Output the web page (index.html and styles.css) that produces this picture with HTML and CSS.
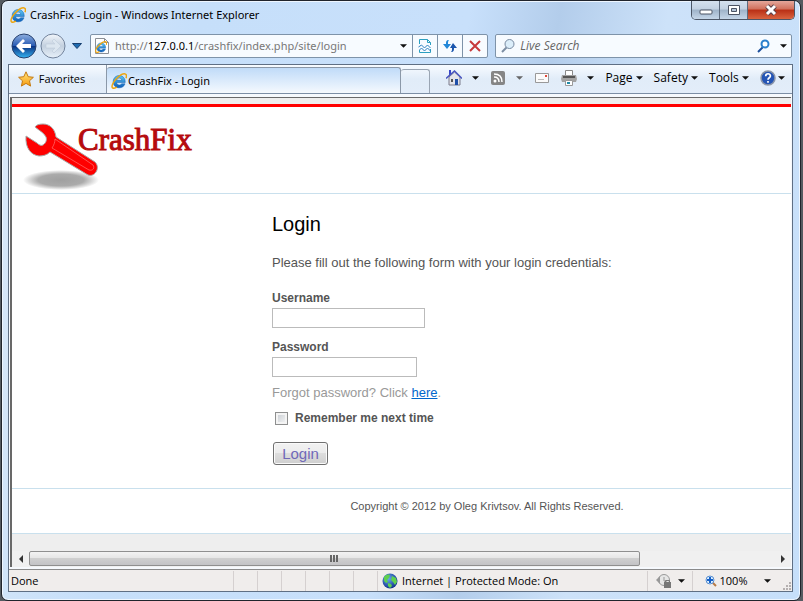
FILE: index.html
```html
<!DOCTYPE html>
<html lang="en">
<head>
<meta charset="utf-8">
<title>CrashFix - Login</title>
<link rel="stylesheet" href="styles.css">
</head>
<body>
<svg class="defs" aria-hidden="true">
  <defs>
    <linearGradient id="blue" x1="0" y1="0" x2="0" y2="1"><stop offset="0" stop-color="#5cc8f5"/><stop offset="1" stop-color="#0b5cb8"/></linearGradient>
    <linearGradient id="back" x1="0" y1="0" x2="0" y2="1"><stop offset="0" stop-color="#8fb0e0"/><stop offset=".48" stop-color="#2a5cb4"/><stop offset=".5" stop-color="#0a2f80"/><stop offset="1" stop-color="#35b4f2"/></linearGradient>
    <linearGradient id="fwd" x1="0" y1="0" x2="0" y2="1"><stop offset="0" stop-color="#f2f6fb"/><stop offset=".5" stop-color="#c3d0df"/><stop offset="1" stop-color="#e8f1fa"/></linearGradient>
    <linearGradient id="gold" x1="0" y1="0" x2="0" y2="1"><stop offset="0" stop-color="#ffe680"/><stop offset="1" stop-color="#f79a0c"/></linearGradient>
    <radialGradient id="globe" cx=".4" cy=".35" r=".7"><stop offset="0" stop-color="#6aa9f0"/><stop offset="1" stop-color="#0c2c86"/></radialGradient>
    <radialGradient id="shade"><stop offset="0" stop-color="#a0a0a0"/><stop offset=".6" stop-color="#ababab"/><stop offset="1" stop-color="#fff"/></radialGradient>
  </defs>
  <symbol id="ie" viewBox="0 0 16 16">
    <path d="M14.2 9.6H5.6c.2 1.6 1.300 2.400 2.700 2.400 1 0 1.800-.4 2.200-1.200h3.500c-.8 2.600-3 4-5.800 4C4.600 14.800 2.200 12.300 2.200 8.700 2.200 5.200 4.700 2.600 8.200 2.600c3.800 0 6.200 2.700 6 7zM5.700 7.300h5c-.1-1.300-1-2.200-2.400-2.200-1.400 0-2.300.8-2.600 2.200z" fill="url(#blue)" stroke="#0d5db0" stroke-width=".5"/>
    <path d="M15 5.200c.7-2 .6-3.600-.5-4.100-1.800-.8-5.300 1-8.400 3.900C2.700 8.200.2 12.600 1.300 14.500c.7 1.100 2.600.8 4.600-.4" fill="none" stroke="#eda50f" stroke-width="1.500"/>
  </symbol>
  <symbol id="down" viewBox="0 0 8 4"><path d="M0 0h8L4 4z"/></symbol>
</svg>

<div class="window">
  <header class="titlebar">
    <svg class="i16"><use href="#ie"/></svg>
    <span class="caption">CrashFix - Login - Windows Internet Explorer</span>
    <div class="controls">
      <button class="min" aria-label="Minimize"><svg viewBox="0 0 14 12"><rect x="1" y="6" width="12" height="4" rx="1" fill="#fff" stroke="#4c5464"/></svg></button>
      <button class="max" aria-label="Maximize"><svg viewBox="0 0 14 12"><path d="M1.500 1.500h11v9h-11z" fill="#fff" stroke="#4c5464"/><path d="M4.500 4.500h5v3h-5z" fill="#b5c5d8" stroke="#4c5464"/></svg></button>
      <button class="close" aria-label="Close"><svg viewBox="0 0 14 12"><path d="M3 2l8 8M11 2l-8 8" stroke="#5a4048" stroke-width="5"/><path d="M3 2l8 8M11 2l-8 8" stroke="#fff" stroke-width="3"/></svg></button>
    </div>
  </header>

  <nav class="navbar">
    <div class="travel">
      <button aria-label="Back"><svg viewBox="0 0 26 26"><circle cx="13" cy="13" r="12" fill="url(#back)" stroke="#28416f"/><path d="M5 13l7-7 2 2-3 3h9v4h-9l3 3-2 2z" fill="#fff"/></svg></button>
      <button aria-label="Forward"><svg viewBox="0 0 26 26"><circle cx="13" cy="13" r="12" fill="url(#fwd)" stroke="#71829b"/><path d="M21 13l-7-7-2 2 3 3H6v4h9l-3 3 2 2z" fill="#dce6f0" stroke="#b8c6d6" stroke-width=".5"/></svg></button>
      <button class="recent" aria-label="Recent pages"><svg viewBox="0 0 10 6"><path d="M.5.5h9L5 5.500z" fill="#1e6bb0" stroke="#173f70"/></svg></button>
    </div>
    <div class="address">
      <svg class="i16 page-icon" viewBox="0 0 16 16"><path d="M1.500.5h9l4 4v11h-13z" fill="#fff" stroke="#8a8f96"/><path d="M10.500.5v4h4" fill="none" stroke="#8a8f96"/><use href="#ie" x="1" y="3" width="12" height="12"/></svg>
      <a class="url" href="#">http://<b>127.0.0.1</b>/crashfix/index.php/site/login</a>
      <button class="drop" aria-label="Show addresses"><svg class="arrow"><use href="#down"/></svg></button>
      <button class="cell" aria-label="Compatibility view"><svg class="i16" viewBox="0 0 16 16" fill="none" stroke="#2c9fc0"><path d="M2.500 6V1.500h8l3 3V7M10.500 1.500v3h3M2.500 12v2.500h11V11"/><path d="M1.500 9l3-2 3 3 3-3 3 3M2.500 12l2-2 3 3 3-3 3 3" stroke="#2c80c0"/></svg></button>
      <button class="cell" aria-label="Refresh"><svg class="i16" viewBox="0 0 16 16"><path d="M7 2C4 2 4 4 4 6H1l4 5 4-5H6c0-2 0-3 1-4z" fill="#2187d8"/><path d="M9 14c3 0 3-2 3-4h3l-4-5-3 5h2c0 2 0 3-1 4z" fill="#1b56ad"/></svg></button>
      <button class="cell" aria-label="Stop"><svg class="i16" viewBox="0 0 16 16"><path d="M3 3l10 10M13 3L3 13" stroke="#c7393b" stroke-width="2"/></svg></button>
    </div>
    <div class="search">
      <svg class="i16" viewBox="0 0 16 16"><path d="M7 9l-5 5" stroke="#7d8ea3" stroke-width="2"/><circle cx="9.500" cy="6" r="4.500" fill="#dceefa" stroke="#7789a0"/></svg>
      <input type="text" placeholder="Live Search" aria-label="Live Search">
      <button aria-label="Search"><svg class="i16" viewBox="0 0 16 16"><path d="M7 9l-5 5" stroke="#1c4f9c" stroke-width="2"/><circle cx="9" cy="6" r="3.500" fill="#fff" stroke="#2b80cd" stroke-width="2"/></svg></button>
      <button aria-label="Search options"><svg class="arrow"><use href="#down"/></svg></button>
    </div>
  </nav>

  <div class="client">
    <div class="commandbar">
      <button class="favorites"><svg class="i16" viewBox="0 0 16 16"><path d="M8 .8l2.200 4.900 5.200.6-3.900 3.500 1.100 5.300L8 12.400l-4.600 2.700 1.100-5.300L.6 6.300l5.200-.6z" fill="url(#gold)" stroke="#c47a12"/></svg>Favorites</button>
      <a class="tab" href="#"><svg class="i16"><use href="#ie"/></svg>CrashFix - Login</a>
      <button class="newtab" aria-label="New tab"></button>
      <div class="tools">
        <button class="split" aria-label="Home"><svg class="i16" viewBox="0 0 16 16"><path d="M3 7v8h11V7L8.500 2z" fill="#e4e4ea" stroke="#7c7c8c"/><path d="M3 0h2v5H3z" fill="#3846c8"/><path d="M0 8.500L8.500 1 16 8.500" fill="none" stroke="#4a55c0" stroke-width="1.500"/><path d="M9 9h3v6H9z" fill="#1f4fa8"/><path d="M5 9h2v3H5z" fill="#555"/></svg><svg class="arrow"><use href="#down"/></svg></button>
        <button class="split dim" aria-label="Feeds"><svg class="i16" viewBox="0 0 16 16"><rect x="1" y="1" width="14" height="14" rx="2" fill="#858585"/><circle cx="5" cy="11" r="1.500" fill="#fff"/><path d="M4 7c3 0 5 2 5 5M4 4c5 0 8 3 8 8" fill="none" stroke="#fff" stroke-width="1.500"/></svg><svg class="arrow"><use href="#down"/></svg></button>
        <button class="mail" aria-label="Read mail"><svg class="i16" viewBox="0 0 16 16"><path d="M1.500 3.500h13v9h-13z" fill="#fbfbfb" stroke="#999"/><path d="M11 5h2v2h-2z" fill="#e04a3c"/><path d="M4 9.500h6" stroke="#bbb"/></svg></button>
        <button class="split" aria-label="Print"><svg class="i16" viewBox="0 0 16 16"><path d="M4.500.5h7V6h-7z" fill="#fff" stroke="#888"/><path d="M1 5h14l1 4-1 3H1L0 9z" fill="#a2a2a2"/><path d="M2 6h12v2H2z" fill="#555"/><path d="M4.500 10.500h7v5h-7z" fill="#fff" stroke="#999"/><path d="M6 12h3v2H6z" fill="#208ba8"/></svg><svg class="arrow"><use href="#down"/></svg></button>
        <button class="menu">Page<svg class="arrow"><use href="#down"/></svg></button>
        <button class="menu">Safety<svg class="arrow"><use href="#down"/></svg></button>
        <button class="menu">Tools<svg class="arrow"><use href="#down"/></svg></button>
        <button class="help" aria-label="Help"><svg class="i16" viewBox="0 0 16 16"><circle cx="8" cy="8" r="7" fill="#2455b5" stroke="#8b95a8" stroke-width="1.500"/><path d="M5.700 6.200C5.700 3 10.400 3 10.400 6 10.400 7.800 8 7.700 8 9.700M8 11v1.700" fill="none" stroke="#fff" stroke-width="1.700"/></svg><svg class="arrow"><use href="#down"/></svg></button>
      </div>
    </div>

    <div class="viewport">
      <div class="page">
        <div class="banner">
          <svg class="wrench" viewBox="0 0 80 72">
            <ellipse cx="38" cy="60" rx="38" ry="10" fill="url(#shade)"/>
            <path d="M12 7c1-2 4-3 8-3 7 0 12 5 13 13l39 25c3 3 3 7 1 10s-5 4-8 3L27 32c-3 3-7 4-11 4C8 35 2 28 3 16l11 7c2 2 4 3 6 2 3-2 4-5 3-8-2-4-6-6-11-10z" fill="#fe0000" stroke="#a9a9a9"/>
            <path d="M32 19c0 3-1 6-3 9l37 22c4 1 6-2 4-5z" stroke="#ff7373" stroke-width=".7" fill="none"/>
          </svg>
          <span class="brand">CrashFix</span>
        </div>
        <main class="content">
          <h1>Login</h1>
          <p class="intro">Please fill out the following form with your login credentials:</p>
          <form>
            <div class="row"><label for="user">Username</label><input class="text user" id="user" type="text"></div>
            <div class="row"><label for="pass">Password</label><input class="text pass" id="pass" type="password">
              <p class="hint">Forgot password? Click <a href="#">here</a>.</p></div>
            <div class="remember"><input id="rem" type="checkbox"><label for="rem">Remember me next time</label></div>
            <button class="submit" type="button">Login</button>
          </form>
        </main>
        <footer class="legal">Copyright © 2012 by Oleg Krivtsov. All Rights Reserved.</footer>
      </div>
      <div class="scrollbar">
        <button aria-label="Scroll left"><svg viewBox="0 0 4 8"><path d="M4 0v8L0 4z" fill="#333"/></svg></button>
        <div class="track"><div class="thumb"><i></i><i></i><i></i></div></div>
        <button aria-label="Scroll right"><svg viewBox="0 0 4 8"><path d="M0 0v8l4-4z" fill="#333"/></svg></button>
      </div>
    </div>

    <div class="statusbar">
      <span class="state">Done</span>
      <span class="slot"></span><span class="slot"></span><span class="slot"></span><span class="slot"></span><span class="slot"></span><span class="slot"></span>
      <span class="zone"><svg class="i16" viewBox="0 0 16 16"><circle cx="8" cy="8" r="7.500" fill="url(#globe)"/><path d="M2 4c2-3 5-3 6-2L7 5 5 7l1 2-2 1-2-2zM10 3l4 2 1 4-2 3-2-3-2-2zM6 10l3 1 1 2-2 2-2-2z" fill="#5fd04e"/></svg>Internet | Protected Mode: On</span>
      <button class="filter" aria-label="InPrivate filtering"><svg class="i16" viewBox="0 0 16 16"><circle cx="8" cy="7" r="5.500" fill="#e6e6e6" stroke="#999"/><path d="M0 7l4-4v8z" fill="#999"/><path d="M8 4v4l3 1" fill="none" stroke="#999"/><path d="M8 9h7v6H8z" fill="#777"/><path d="M9.500 9V7.500h4V9" fill="none" stroke="#777"/></svg><svg class="arrow"><use href="#down"/></svg></button>
      <button class="zoom"><svg class="i12" viewBox="0 0 12 12"><path d="M7 7l4 4" stroke="#b87b45" stroke-width="2"/><circle cx="5" cy="5" r="4" fill="#d8edff" stroke="#5a8fd0"/><path d="M5 2v6M2 5h6" stroke="#1560c8" stroke-width="2"/></svg>100%<svg class="arrow"><use href="#down"/></svg></button>
      <svg class="grip" viewBox="0 0 9 9" fill="#b5b0b0"><path d="M6 0h2v2H6zM3 3h2v2H3zM6 3h2v2H6zM0 6h2v2H0zM3 6h2v2H3zM6 6h2v2H6z"/></svg>
    </div>
  </div>
</div>
</body>
</html>
```
FILE: styles.css
```css
* { box-sizing: border-box; }
body {
  margin: 0;
  background: #555b61;
  color: #000;
  font: 11px/16px "Open Sans", sans-serif;
}
button {
  padding: 0;
  border: 0;
  background: none;
  color: inherit;
  font: inherit;
  display: flex;
  align-items: center;
  justify-content: center;
}
a { color: inherit; text-decoration: none; }
.defs { position: absolute; width: 0; height: 0; }
.i16 { width: 16px; height: 16px; flex: none; }
.i12 { width: 12px; height: 12px; flex: none; }
.arrow { width: 7px; height: 4px; flex: none; fill: #111; }

.window {
  display: flex;
  flex-direction: column;
  min-height: 100vh;
  margin: 0 2px 0 1px;
  padding: 0 7px 8px 6px;
  border: 1px solid #20242c;
  border-radius: 7px;
  background: linear-gradient(100deg, #dbe9f8 0, #c6dffa 22%, #c8e0fb 52%, #b3cdeb 62%, #cde2f9 74%, #c6dffa 100%);
  box-shadow: inset 0 0 0 1px #eef6ff;
}

/* title bar */
.titlebar { display: flex; height: 28px; padding-left: 2px; }
.titlebar .i16 { margin: 6px 4px 0 0; }
.caption { flex: 1; margin-top: 6px; font-family: "Noto Sans", sans-serif; white-space: nowrap; }
.controls { display: flex; height: 19px; margin-right: -2px; border: 1px solid #4c5666; border-top: 0; border-radius: 0 0 5px 5px; overflow: hidden; }
.controls button { width: 28px; background: linear-gradient(#d5e1ef 0, #c2d1e2 45%, #9fb3c9 50%, #c5d6e8 100%); border-right: 1px solid #5c6a7d; }
.controls svg { width: 14px; height: 12px; }
.controls .close { width: 46px; border: 0; background: linear-gradient(#e4a79b 0, #d0705c 45%, #b92f15 50%, #d9643f 100%); }

/* navigation */
.navbar { display: flex; align-items: center; height: 35px; gap: 7px; padding: 0 1px 1px 3px; }
.travel { display: flex; align-items: center; width: 72px; gap: 3px; }
.travel svg { width: 26px; height: 26px; }
.travel .recent { margin-left: 3px; }
.travel .recent svg { width: 10px; height: 6px; }
.address, .search { display: flex; align-items: center; height: 24px; border: 1px solid #7e93a9; border-radius: 2px; background: #f7fbff; }
.address { flex: 1; }
.search { width: 38%; padding: 0 4px; }
.page-icon { margin: 0 5px 0 3px; }
.url { flex: 1; color: #777; font-family: "Noto Sans", sans-serif; white-space: nowrap; }
.url b { color: #000; font-weight: 400; }
.drop { width: 18px; }
.cell { width: 25px; height: 22px; border-left: 1px solid #7e93a9; }
.search input { flex: 1; min-width: 0; border: 0; padding: 0 4px; background: none; font: italic 12px/16px "Open Sans", sans-serif; }
.search input::placeholder { color: #666; opacity: 1; }
.search button:last-child { margin-left: 8px; }

/* client area */
.client { flex: 1; display: flex; flex-direction: column; border: 1px solid #5f6f84; background: #f6f9fd; }
.commandbar { display: flex; height: 29px; border-bottom: 1px solid #7c8ea5; background: linear-gradient(#f7fbff, #e1ecf8 50%, #e3edf9); }
.favorites { width: 98px; gap: 5px; padding: 0 12px 0 0; border-right: 1px solid #8b98a8; }
.tab { display: flex; align-items: center; width: 294px; margin-top: 2px; padding-left: 4px; gap: 1px; border: 1px solid #8b98a8; border-width: 1px 1px 0 0; border-radius: 3px 3px 0 0; background: linear-gradient(#c0dbf8, #eaf3fd 80%, #f6f9fd); font-family: "Noto Sans", sans-serif; }
.newtab { width: 29px; margin-top: 4px; border: 1px solid #9aa5b3; border-width: 1px 1px 0 0; border-radius: 3px 3px 0 0; }
.tools { flex: 1; display: flex; align-items: center; justify-content: space-between; padding: 0 7px 2px 16px; font: 12px/16px "Open Sans", sans-serif; }
.split { gap: 10px; }
.dim .arrow { fill: #666; }
.menu { gap: 3px; }
.help { gap: 2px; }

.viewport { flex: 1; display: flex; flex-direction: column; overflow: hidden; margin: 3px 1px 2px 1px; padding-top: 6px; border: 1px solid #696969; border-width: 1px 0 0 2px; background: #eee; }
.page { width: 950px; background: #fff; border-top: 3px solid #f00; border-bottom: 1px solid #c9e0ed; color: #555; font: 13px/18px "Liberation Sans", Arial, sans-serif; }
.banner { display: flex; height: 87px; padding: 13px 0 0 11px; border-bottom: 1px solid #c9e0ed; }
.wrench { width: 80px; height: 72px; margin-right: -25px; flex: none; }
.brand { color: #b50b0e; font: 31px/40px "Liberation Serif", serif; -webkit-text-stroke: 1px #b50b0e; }
.content { padding: 18px 20px 23px 260px; }
h1 { margin: 0 0 18px; color: #000; font-size: 20px; line-height: 24px; font-weight: 400; }
.intro { margin: 0 0 18px; }
label { display: block; font-weight: 700; font-size: 12px; line-height: 16px; }
.row { margin-bottom: 10px; }
.text { display: block; height: 20px; margin-top: 2px; border: 1px solid #bbb; }
.row + .row { margin-top: 11px; }
.user { width: 153px; }
.pass { width: 145px; }
.hint { margin: 7px 0 0; color: #999; }
.hint a { color: #06c; text-decoration: underline; }
.remember { display: flex; align-items: center; gap: 7px; margin: -2px 0 16px 3px; }
.remember input { appearance: none; width: 13px; height: 13px; margin: 0; border: 1px solid #8e8f8f; background: linear-gradient(135deg, #c5cad0, #f8f8f8); box-shadow: inset 0 0 0 2px #f4f4f4; }
.submit { width: 55px; height: 23px; margin-left: 1px; border: 1px solid #707070; border-radius: 3px; background: linear-gradient(#f2f2f2, #ebebeb 50%, #ddd 50%, #cfcfcf); box-shadow: inset 0 0 0 1px #fafafa; color: #7068b8; font: 15px/18px "Liberation Sans", Arial, sans-serif; }
.legal { height: 45px; padding-top: 8px; border-top: 1px solid #c9e0ed; font-size: 11px; text-align: center; }

.scrollbar { display: flex; height: 16px; margin-top: auto; background: #f0f0f0; }
.scrollbar button { width: 17px; }
.scrollbar svg { width: 4px; height: 8px; }
.track { flex: 1; display: flex; }
.thumb { display: flex; align-items: center; justify-content: center; gap: 1px; width: 82%; height: 15px; border: 1px solid #8f8f8f; border-radius: 2px; background: linear-gradient(#f3f3f3, #e6e6e6 45%, #cfcfcf 50%, #c3c3c6); }
.thumb i { width: 2px; height: 7px; background: #666; }

.statusbar { display: flex; align-items: center; height: 22px; border-top: 1px solid #8a8a8a; background: #f0edec; }
.state { flex: 1; padding-left: 2px; }
.slot { width: 24px; height: 20px; border-left: 1px solid #d5d0d0; }
.zone { display: flex; align-items: center; gap: 4px; width: 270px; height: 20px; padding-left: 4px; border-left: 1px solid #d5d0d0; white-space: nowrap; }
.filter { gap: 6px; width: 45px; height: 20px; border-left: 1px solid #d5d0d0; }
.zoom { gap: 3px; width: 91px; height: 20px; border-left: 1px solid #d5d0d0; }
.zoom .arrow { margin-left: 14px; }
.grip { width: 9px; height: 9px; align-self: flex-end; }
```
